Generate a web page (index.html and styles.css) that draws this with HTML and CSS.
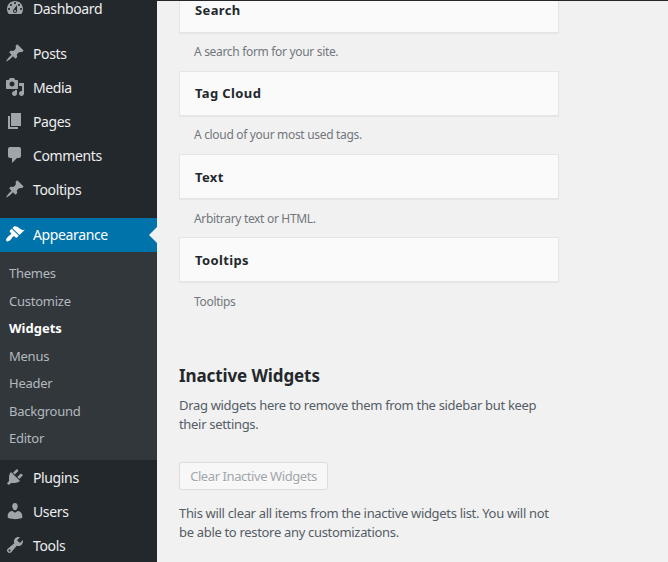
FILE: index.html
```html
<!DOCTYPE html>
<html lang="en">
<head>
  <meta charset="UTF-8">
  <meta name="viewport" content="width=device-width, initial-scale=1.0">
  <title>Widgets</title>
  <link rel="stylesheet" href="styles.css">
</head>
<body>
  <nav class="sidebar">
    <a class="menu-item" href="#">
      <svg class="icon" viewBox="0 0 20 20"><path d="M3.76 16h12.48c1.1-1.37 1.76-3.11 1.76-5 0-4.42-3.58-8-8-8s-8 3.58-8 8c0 1.89.66 3.63 1.76 5zM10 4c.55 0 1 .45 1 1s-.45 1-1 1-1-.45-1-1 .45-1 1-1zM6 6c.55 0 1 .45 1 1s-.45 1-1 1-1-.45-1-1 .45-1 1-1zm8 0c.55 0 1 .45 1 1s-.45 1-1 1-1-.45-1-1 .45-1 1-1zm-5.37 5.55L12 7v6c0 1.1-.9 2-2 2s-2-.9-2-2c0-.57.24-1.08.63-1.45zM4 10c.55 0 1 .45 1 1s-.45 1-1 1-1-.45-1-1 .45-1 1-1zm12 0c.55 0 1 .45 1 1s-.45 1-1 1-1-.45-1-1 .45-1 1-1zm-5 3c0-.55-.45-1-1-1s-1 .45-1 1 .45 1 1 1 1-.45 1-1z" fill-rule="evenodd"/></svg>
      <span>Dashboard</span>
    </a>
    <div class="separator"></div>
    <a class="menu-item" href="#">
      <svg class="icon" viewBox="0 0 20 20"><path d="M10.44 3.02l1.82-1.82 6.36 6.35-1.83 1.82c-1.05-.68-2.48-.57-3.41.36l-.75.75c-.92.93-1.04 2.35-.35 3.41l-1.83 1.82-2.41-2.41-2.8 2.79c-.42.42-3.38 2.71-3.8 2.29s1.86-3.39 2.28-3.81l2.79-2.79L4.1 9.36l1.83-1.82c1.05.69 2.48.57 3.4-.36l.75-.75c.93-.92 1.05-2.35.36-3.41z"/></svg>
      <span>Posts</span>
    </a>
    <a class="menu-item" href="#">
      <svg class="icon" viewBox="0 0 20 20"><path d="M13 11V4c0-.55-.45-1-1-1h-1.67L9 1H5L3.67 3H2c-.55 0-1 .45-1 1v7c0 .55.45 1 1 1h10c.55 0 1-.45 1-1zM7 4.5c1.38 0 2.5 1.12 2.5 2.5S8.38 9.5 7 9.5 4.5 8.38 4.5 7 5.62 4.5 7 4.5zM14 6h5v10.5c0 1.38-1.12 2.5-2.5 2.5S14 17.88 14 16.5s1.12-2.5 2.5-2.5c.17 0 .34.02.5.05V9h-3V6zm-4 8.05V13h2v3.5c0 1.38-1.12 2.5-2.5 2.5S7 17.88 7 16.5 8.12 14 9.5 14c.17 0 .34.02.5.05z" fill-rule="evenodd"/></svg>
      <span>Media</span>
    </a>
    <a class="menu-item" href="#">
      <svg class="icon" viewBox="0 0 20 20"><path d="M6 15V2h10v13H6zm-1 1h8v2H3V5h2v11z"/></svg>
      <span>Pages</span>
    </a>
    <a class="menu-item" href="#">
      <svg class="icon" viewBox="0 0 20 20"><path d="M5 2h9c1.1 0 2 .9 2 2v7c0 1.1-.9 2-2 2h-2l-5 5v-5H5c-1.1 0-2-.9-2-2V4c0-1.1.9-2 2-2z"/></svg>
      <span>Comments</span>
    </a>
    <a class="menu-item" href="#">
      <svg class="icon" viewBox="0 0 20 20"><path d="M10.44 3.02l1.82-1.82 6.36 6.35-1.83 1.82c-1.05-.68-2.48-.57-3.41.36l-.75.75c-.92.93-1.04 2.35-.35 3.41l-1.83 1.82-2.41-2.41-2.8 2.79c-.42.42-3.38 2.71-3.8 2.29s1.86-3.39 2.28-3.81l2.79-2.79L4.1 9.36l1.83-1.82c1.05.69 2.48.57 3.4-.36l.75-.75c.93-.92 1.05-2.35.36-3.41z"/></svg>
      <span>Tooltips</span>
    </a>
    <div class="separator"></div>
    <a class="menu-item current" href="#">
      <svg class="icon" viewBox="0 0 20 20"><path d="M14.48 11.06L7.41 3.99l1.5-1.5c.5-.56 2.3-.47 3.51.32 1.21.8 1.43 1.28 2.91 2.1 1.18.64 2.45 1.26 4.45.85zm-.71.71L6.7 4.7 4.93 6.47c-.39.39-.39 1.02 0 1.41l1.06 1.06c.39.39.39 1.03 0 1.42-.6.6-1.43 1.11-2.21 1.69-.35.26-.7.53-1.01.84C1.43 14.23.4 16.08 1.4 17.07c.99 1 2.84-.03 4.18-1.36.31-.31.58-.66.85-1.02.57-.78 1.08-1.61 1.69-2.21.39-.39 1.02-.39 1.41 0l1.06 1.06c.39.39 1.02.39 1.41 0z"/></svg>
      <span>Appearance</span>
    </a>
    <div class="submenu">
      <a href="#">Themes</a>
      <a href="#">Customize</a>
      <a class="active" href="#">Widgets</a>
      <a href="#">Menus</a>
      <a href="#">Header</a>
      <a href="#">Background</a>
      <a href="#">Editor</a>
    </div>
    <a class="menu-item lower" href="#">
      <svg class="icon" viewBox="0 0 20 20"><path d="M13.11 4.36L9.87 7.6 8 5.73l3.24-3.24c.35-.34 1.05-.2 1.56.32.52.51.66 1.21.31 1.55zm-8 1.77l.91-1.12 9.01 9.01-1.19.84c-.71.71-2.63 1.16-3.82 1.16H6.14L4.9 17.26c-.59.59-1.54.59-2.12 0-.59-.58-.59-1.53 0-2.12l1.24-1.24v-3.88c0-1.13.4-3.19 1.09-3.89zm7.26 3.97l3.24-3.24c.34-.35 1.04-.21 1.55.31.52.51.66 1.21.31 1.55l-3.24 3.25z"/></svg>
      <span>Plugins</span>
    </a>
    <a class="menu-item lower" href="#">
      <svg class="icon" viewBox="0 0 20 20"><path d="M10 9.25c-2.27 0-2.73-3.44-2.73-3.44C7 4.02 7.82 2 9.97 2c2.16 0 2.98 2.02 2.71 3.81 0 0-.41 3.44-2.68 3.44zm0 2.57L12.72 10c2.39 0 4.52 2.33 4.52 4.53v2.49s-3.65 1.13-7.24 1.13c-3.65 0-7.24-1.13-7.24-1.13v-2.49c0-2.25 1.94-4.48 4.47-4.48z"/></svg>
      <span>Users</span>
    </a>
    <a class="menu-item lower" href="#">
      <svg class="icon" viewBox="0 0 20 20"><path d="M16.68 9.77c-1.34 1.34-3.3 1.67-4.95.99l-5.41 6.52c-.99.99-2.59.99-3.58 0s-.99-2.59 0-3.57l6.52-5.42c-.68-1.65-.35-3.61.99-4.95 1.28-1.28 3.12-1.62 4.72-1.06l-2.89 2.89 2.82 2.82 2.86-2.87c.53 1.58.18 3.39-1.08 4.65zM3.81 16.21c.4.39 1.04.39 1.43 0 .4-.4.4-1.04 0-1.43-.39-.4-1.03-.4-1.43 0-.39.39-.39 1.03 0 1.43z" fill-rule="evenodd"/></svg>
      <span>Tools</span>
    </a>
  </nav>

  <main class="content">
    <div class="widget-list">
      <div class="widget">
        <h3>Search</h3>
        <p>A search form for your site.</p>
      </div>
      <div class="widget">
        <h3>Tag Cloud</h3>
        <p>A cloud of your most used tags.</p>
      </div>
      <div class="widget">
        <h3>Text</h3>
        <p>Arbitrary text or HTML.</p>
      </div>
      <div class="widget">
        <h3>Tooltips</h3>
        <p>Tooltips</p>
      </div>
    </div>

    <section class="inactive">
      <h2>Inactive Widgets</h2>
      <p>Drag widgets here to remove them from the sidebar but keep<br>their settings.</p>
      <button type="button" disabled>Clear Inactive Widgets</button>
      <p>This will clear all items from the inactive widgets list. You will not<br>be able to restore any customizations.</p>
    </section>
  </main>
</body>
</html>
```
FILE: styles.css
```css
* {
  box-sizing: border-box;
}

body {
  display: flex;
  width: 668px;
  height: 562px;
  margin: 0;
  overflow: hidden;
  background-color: #f1f1f1;
  font-family: "Noto Sans", "Open Sans", sans-serif;
  font-size: 13px;
  color: #555d66;
}

a {
  text-decoration: none;
}

.sidebar {
  flex: none;
  width: 157px;
  height: 562px;
  overflow: hidden;
  background-color: #23282d;
}

.menu-item {
  display: flex;
  height: 34px;
  padding-left: 5px;
  font-size: 14px;
  line-height: 34px;
  letter-spacing: -0.37px;
  color: #eee;
}

.menu-item:first-child {
  margin-top: -8px;
}

.icon {
  flex: none;
  width: 20px;
  height: 20px;
  margin: 6px 8px 0 0;
  fill: #a0a5aa;
}

.lower {
  padding-top: 1px;
}

.separator {
  height: 11px;
}

.current {
  position: relative;
  background-color: #0073aa;
  color: #fff;
}

.current .icon {
  fill: #fff;
}

.current::after {
  content: "";
  position: absolute;
  top: 9px;
  right: 0;
  border: 8px solid transparent;
  border-left-width: 0;
  border-right-color: #f1f1f1;
}

.submenu {
  height: 208px;
  padding: 8px 9px 7px;
  background-color: #32373c;
}

.submenu a {
  display: block;
  height: 27.57px;
  line-height: 27.57px;
  letter-spacing: -0.25px;
  color: #b4b9be;
}

.submenu .active {
  font-weight: bold;
  letter-spacing: 0;
  color: #fff;
}

.content {
  flex: 1;
  height: 562px;
  padding-left: 22px;
  overflow: hidden;
  border-top: 1px solid #23282d;
}

.widget-list {
  width: 380px;
  margin-top: -13.45px;
}

.widget {
  height: 83.3px;
}

.widget h3 {
  height: 45px;
  margin: 0;
  padding: 0.45px 0 0 15px;
  border: 1px solid #e5e5e5;
  background-color: #fafafa;
  box-shadow: 0 1px 1px rgba(0, 0, 0, 0.04);
  font-size: 13px;
  line-height: 43px;
  letter-spacing: 0.38px;
  color: #23282d;
}

.widget p {
  margin: 0;
  padding: 10.45px 15px 0;
  font-size: 12px;
  line-height: 18px;
  letter-spacing: -0.32px;
  color: #72777c;
}

.inactive h2 {
  margin: 45.45px 0 10px;
  font-size: 17px;
  line-height: 20px;
  letter-spacing: -0.1px;
  color: #23282d;
}

.inactive p {
  margin: 0;
  line-height: 19px;
  letter-spacing: -0.32px;
  white-space: nowrap;
}

.inactive button {
  display: block;
  width: 149px;
  height: 28px;
  margin: 28px 0 14px;
  padding: 0;
  border: 1px solid #ddd;
  border-radius: 3px;
  background-color: #f7f7f7;
  font-family: inherit;
  font-size: 13px;
  line-height: 26px;
  letter-spacing: -0.42px;
  text-shadow: 0 1px 0 #fff;
  color: #a0a5aa;
}
```
